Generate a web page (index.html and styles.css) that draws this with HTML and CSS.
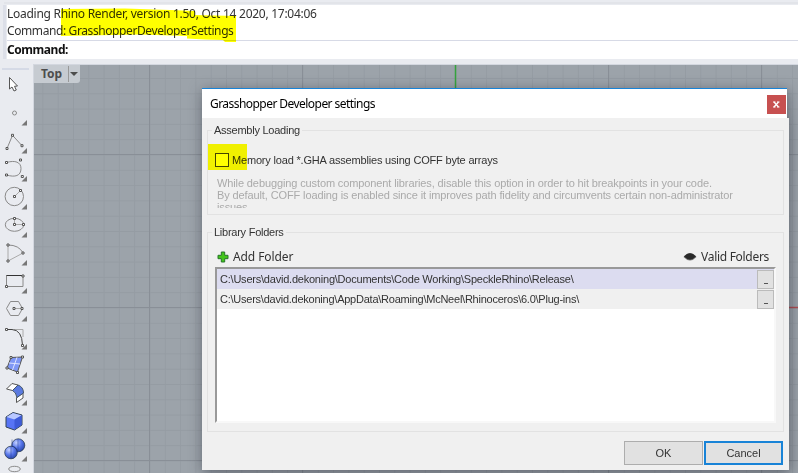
FILE: index.html
```html
<!DOCTYPE html>
<html lang="en">
<head>
<meta charset="utf-8">
<title>Grasshopper Developer settings</title>
<link rel="stylesheet" href="styles.css">
</head>
<body>
<div class="app">
  <header class="console">
    <div class="log">
      <p class="line l1">Loading Rhino Render, version 1.50, Oct 14 2020, 17:04:06</p>
      <p class="line l2">Command: GrasshopperDeveloperSettings</p>
      <svg class="marker" width="180" height="40" viewBox="58 5 180 40"><path fill="#ff0" d="M61 9L125 8.500L170 10L195 11V15L236 16V42H225L223 40L205 39.500L187 38.500V36L140 34.500L61 36Z"/></svg>
    </div>
    <div class="prompt"><span>Command:</span></div>
  </header>
  <div class="work">
    <nav class="tools">
      <svg class="tool" viewBox="0 0 34 28"><path d="M9.500 6.500V18L12 16L14 20L16.300 19L14.500 15.300L17.500 15Z" fill="#fff" stroke="#555"/></svg>
      <svg class="tool" viewBox="0 0 34 28"><circle cx="14.500" cy="14" r="2" class="ln"/><path class="tri" d="M27 21V26.500H21.500Z"/></svg>
      <svg class="tool" viewBox="0 0 34 28"><path class="ln" d="M7 21.500L12.500 8.300L22 18.700"/><path class="h" d="M6 20.500h2v2h-2zM11.500 7.300h2v2h-2zM21 17.700h2v2h-2z"/><path class="tri" d="M27 21V26.500H21.500Z"/></svg>
      <svg class="tool" viewBox="0 0 34 28"><path class="ln" d="M6.500 7.500C15 5 21 7 21 13.500C21 21 15 22.500 6.500 20"/><path class="h" d="M5.500 6.500h2v2h-2zM19.500 4h2v2h-2zM5.500 19h2v2h-2zM21.300 20.500h2v2h-2z"/><path class="tri" d="M27 21V26.500H21.500Z"/></svg>
      <svg class="tool" viewBox="0 0 34 28"><circle class="ln" cx="14.300" cy="13.500" r="9.200"/><path class="ln thin" d="M14.500 13.500L20.500 7.500"/><path class="h" d="M13.500 12.500h2v2h-2zM19.500 6.500h2v2h-2z"/><path class="tri" d="M27 21V26.500H21.500Z"/></svg>
      <svg class="tool" viewBox="0 0 34 28"><ellipse class="ln" cx="14.500" cy="13.800" rx="9.200" ry="6.500"/><path class="ln thin" d="M14.500 7.500V13.500H23.500"/><path class="h" d="M13.500 6.500h2v2h-2zM13.500 12.500h2v2h-2zM22.500 12.500h2v2h-2z"/><path class="tri" d="M27 21V26.500H21.500Z"/></svg>
      <svg class="tool" viewBox="0 0 34 28"><path class="ln thin" d="M8 6V22L23 14"/><path class="ln" d="M8 6Q19 6 23 14"/><path class="h" d="M7 5h2v2h-2zM22 13h2v2h-2zM7 21h2v2h-2z"/><path class="tri" d="M27 21V26.500H21.500Z"/></svg>
      <svg class="tool" viewBox="0 0 34 28"><path class="ln" d="M6.500 8.500H23V19.500H6.500Z"/><path d="M6.500 8.500H23" stroke="#333"/><path class="h" d="M22 8h2v2h-2zM5.500 18.500h2v2h-2z"/><path class="tri" d="M27 21V26.500H21.500Z"/></svg>
      <svg class="tool" viewBox="0 0 34 28"><path class="ln" d="M6.500 13.500L10.500 6.500H18.500L22.500 13.500L18.500 20.500H10.500Z"/><path class="ln thin" d="M14 13.500H22"/><path class="h" d="M13 12.500h2v2h-2zM21 12.500h2v2h-2z"/><path class="tri" d="M27 21V26.500H21.500Z"/></svg>
      <svg class="tool" viewBox="0 0 34 28"><path class="ln thin" d="M14 6.500H23V14"/><path class="ln dark" d="M6.500 6.500H12Q22 7 22.500 22"/><path class="h" d="M5.500 5.500h2v2h-2zM21.500 21.500h2v2h-2z"/><path class="tri" d="M27 21V26.500H21.500Z"/></svg>
      <svg class="tool" viewBox="0 0 34 28"><path d="M11 6.500L22.500 6L17.500 21L7 17Z" fill="#7f97f5" stroke="#555"/><path d="M17 6.300L12.500 19M9 12L20 13" stroke="#dfe5ff" fill="none"/><path class="h" d="M10 5.500h2v2h-2zM21.500 5h2v2h-2zM16.500 20.500h2v2h-2zM6 16h2v2h-2z"/><path class="tri" d="M27 21V26.500H21.500Z"/></svg>
      <svg class="tool" viewBox="0 0 34 28"><path d="M6.500 10L12 4.500L18 6L12.500 11.500ZM16.500 18.500L23 14V19L16.500 23.500Z" fill="#fff" stroke="#555"/><path d="M12.500 11.500L18 6Q23.500 8 23.500 14L17 18.500Q16 13 12.500 11.500Z" fill="#5b7ae0" stroke="#456"/><path class="tri" d="M27 21V26.500H21.500Z"/></svg>
      <svg class="tool" viewBox="0 0 34 28"><path d="M6 10L13 5.500L22 8V18L14.500 23L6 20Z" fill="#5774f5" stroke="#345"/><path d="M6.500 10L13 6L21.500 8.500L14.500 12.500Z" fill="#b9c8ff"/><path d="M14.500 12.500L21.500 8.500V18L14.500 22.500Z" fill="#3d5ad8"/><path class="tri" d="M27 21V26.500H21.500Z"/></svg>
      <svg class="tool" viewBox="0 0 34 28"><defs><radialGradient id="ball" cx=".35" cy=".3" r=".8"><stop offset="0" stop-color="#c5d2ff"/><stop offset=".5" stop-color="#5675ea"/><stop offset="1" stop-color="#24409c"/></radialGradient></defs><circle cx="18.300" cy="10.300" r="6.500" fill="url(#ball)" stroke="#234" stroke-width=".7"/><circle cx="11" cy="17.500" r="6.300" fill="url(#ball)" stroke="#234" stroke-width=".7"/><path d="M12 4.500V11Q17 12 17.500 17M11 11V24M18 4V17" fill="none" stroke="#1c348c" stroke-width=".5"/><path class="tri" d="M27 21V26.500H21.500Z"/></svg>
      <svg class="tool" viewBox="0 0 34 28"><ellipse class="ln" cx="14.500" cy="6" rx="5.800" ry="2.700"/></svg>
    </nav>
    <main class="viewport">
      <svg class="grid" width="764" height="408" viewBox="34 65 764 408">
        <defs><pattern id="minor" x="149.500" y="154.500" width="15.300" height="15.300" patternUnits="userSpaceOnUse"><path d="M0 .5H15.300M.5 0V15.300" stroke="#959ca3" fill="none"/></pattern></defs>
        <rect x="34" y="65" width="764" height="408" fill="url(#minor)"/>
        <path d="M149.500 65V473M302.500 65V473M608.500 65V473M761.500 65V473M34 154.500H798M34 307.500H455M34 460.500H798" stroke="#898f97" fill="none"/>
        <path d="M455.500 65V308" stroke="#35a33d" stroke-width="1.500"/><path d="M455 307.500H798" stroke="#b04c50" stroke-width="1.500"/>
      </svg>
      <div class="tab"><span>Top</span><i></i></div>
    </main>
  </div>
</div>
<section class="dialog">
  <div class="titlebar"><h1>Grasshopper Developer settings</h1><button class="close"><svg width="7" height="7" viewBox="0 0 7 7"><path d="M1 1L5.500 6M5.500 1L1 6" stroke="#fff" stroke-width="1.300"/><path d="M0 1H2.500M4 1H6.500M0 6H2.500M4 6H6.500" stroke="#fff"/></svg></button></div>
  <div class="body">
    <fieldset class="assembly">
      <legend><span class="t-al">Assembly Loading</span></legend>
      <label class="check"><i class="box"></i><span>Memory load *.GHA assemblies using COFF byte arrays</span><b class="spot"></b></label>
      <div class="note"><p class="n1">While debugging custom component libraries, disable this option in order to hit breakpoints in your code.</p><p class="n2">By default, COFF loading is enabled since it improves path fidelity and circumvents certain non-administrator</p><p class="n3">issues.</p></div>
    </fieldset>
    <fieldset class="library">
      <legend><span class="t-lf">Library Folders</span></legend>
      <div class="bar">
        <span class="action"><svg width="12" height="12" viewBox="0 0 12 12"><path d="M4.300 1H7.700V4.300H11V7.700H7.700V11H4.300V7.700H1V4.300H4.300Z" fill="#43c51b" stroke="#27752b"/></svg><span class="t-add">Add Folder</span></span>
        <span class="action"><svg width="14" height="10" viewBox="0 0 14 10"><path d="M.5 5Q7-3 13.500 5Q7 12 .5 5Z" fill="#777"/><path d="M1 4.500Q7-2 13 4.500Q10 7.500 7 7.800Q4 7.500 1 4.500Z" fill="#292929"/></svg><span class="t-valid">Valid Folders</span></span>
      </div>
      <div class="list">
        <div class="row sel"><span class="p1">C:\Users\david.dekoning\Documents\Code Working\SpeckleRhino\Release\</span><button><i></i></button></div>
        <div class="row"><span class="p2">C:\Users\david.dekoning\AppData\Roaming\McNeel\Rhinoceros\6.0\Plug-ins\</span><button><i></i></button></div>
      </div>
    </fieldset>
    <footer><button class="btn">OK</button><button class="btn primary">Cancel</button></footer>
  </div>
</section>
</body>
</html>
```
FILE: styles.css
```css
*{box-sizing:border-box}
body{margin:0;width:798px;height:473px;overflow:hidden;position:relative;background:#e9ebf0;font:11px/14px "Liberation Sans",sans-serif;color:#333}
p,h1{margin:0;white-space:nowrap}
span{white-space:nowrap}
button{padding:0;font:inherit;color:inherit;border-radius:0}
.app{height:473px;display:flex;flex-direction:column}
.console{height:65px;padding:5px 0 0 7px;background:linear-gradient(#e2e4e9,#e2e4e9) 4px 2px/794px 2px no-repeat,linear-gradient(#d3d7df,#d3d7df) 33px 64px/765px 1px no-repeat,linear-gradient(90deg,#e9ebf0 3px,#dcdfe8 3px,#dcdfe8 6px,#e9ebf0 6px) 0 5px/100% 54px no-repeat,#e9ebf0}
.log{height:36px;background:#fff;border-bottom:1px solid #d7dae6;position:relative}
.line{font:12px/17px "Noto Sans",sans-serif;color:#333}
.l1,.l2{width:max-content}
.l1{letter-spacing:-.27px}
.l2{letter-spacing:-.4px}
.marker{position:absolute;left:51px;top:0;mix-blend-mode:multiply}
.prompt{height:18px;background:#fff;font:bold 12px/18px "Noto Sans",sans-serif;letter-spacing:-.45px;color:#111}
.work{height:408px;display:flex}
.tools{width:34px;padding-top:6px;overflow:hidden;border-right:1px solid #d3d7df;background:linear-gradient(#d5dae6,#d5dae6) 2px 3px/27px 2px no-repeat}
.tool{display:block;width:34px;height:28px}
.ln{fill:none;stroke:#8a8a8a}
.thin{stroke:#aaa}
.dark{stroke:#444}
.h{fill:#fff;stroke:#555}
.tri{fill:#777}
.viewport{flex:1;background:#9ca3aa;position:relative;overflow:hidden}
.grid{display:block}
.tab{position:absolute;left:0;top:0;width:46px;height:18px;background:#c6cbd1;border-radius:0 0 3px 0;display:flex;align-items:center;padding-left:7px;font:bold 12px/18px "Noto Sans",sans-serif;color:#4d4d4d}
.tab span{width:28px;border-right:1px solid #999;line-height:16px}
.tab i{border:4px solid transparent;border-top-color:#4d4d4d;border-bottom:0;margin-left:1px}
.dialog{position:absolute;left:202px;top:88px;width:587px;height:382px;filter:drop-shadow(1px 3px 7px rgba(30,34,45,.5))}
.titlebar{width:585px;height:30px;background:#fff;border-top:1px solid #1883d7;display:flex;justify-content:space-between;padding:6px 1px 0 8px}
h1{font:12px/17px "Noto Sans",sans-serif;letter-spacing:-.55px;color:#000}
.close{width:19px;height:19px;border:0;background:#c75050;display:flex;align-items:center;justify-content:center}
.body{height:352px;background:#f0f0f0;padding:5px 5px 0}
fieldset{margin:0;padding:0;border:1px solid #e2e2e2;min-width:0}
legend{margin-left:4px;padding:0 2px;line-height:14px;letter-spacing:-.25px}
.assembly{height:92px}
.library{height:207px;margin-top:10px}
.check{height:26px;display:flex;align-items:center;position:relative;margin-top:7px;padding:5px 0 0 7px;letter-spacing:-.18px}
.box{width:14px;height:14px;border:1px solid #444;background:#fff;margin-right:3px}
.spot{position:absolute;left:0;top:0;width:39px;height:26px;background:#ff0;mix-blend-mode:multiply}
.note{margin:7px 0 0 9px;height:31px;overflow:hidden;line-height:12px;letter-spacing:-.115px;color:#aaa}
.bar{display:flex;justify-content:space-between;padding:8px 14px 0 9px;height:28px}
.action{display:flex;align-items:center;gap:4px;height:20px;font:12px/18px "Noto Sans",sans-serif}
.t-add{letter-spacing:-.1px}
.t-valid{letter-spacing:-.3px}
.list{height:156px;width:561px;margin-left:7px;background:#fff;border:2px solid #f8f8f8;border-top-color:#999;border-left-color:#999}
.row{height:20px;display:flex;justify-content:space-between;align-items:center;padding:0 0 0 3px;background:#f0f0f0}
.sel{background:#dcdcf0}
.p1{letter-spacing:-.22px}
.p2{letter-spacing:-.24px}
.row button{width:17px;height:19px;border:1px solid #bbb;background:#e1e1e1;display:flex;justify-content:center;align-items:flex-end}
.row i{width:4px;height:1px;background:#555;margin-bottom:4px}
footer{display:flex;justify-content:flex-end;gap:1px;padding:9px 1px 0 0}
.btn{width:79px;height:24px;border:1px solid #adadad;background:#e1e1e1}
.primary{border:2px solid #1883d7}
```
